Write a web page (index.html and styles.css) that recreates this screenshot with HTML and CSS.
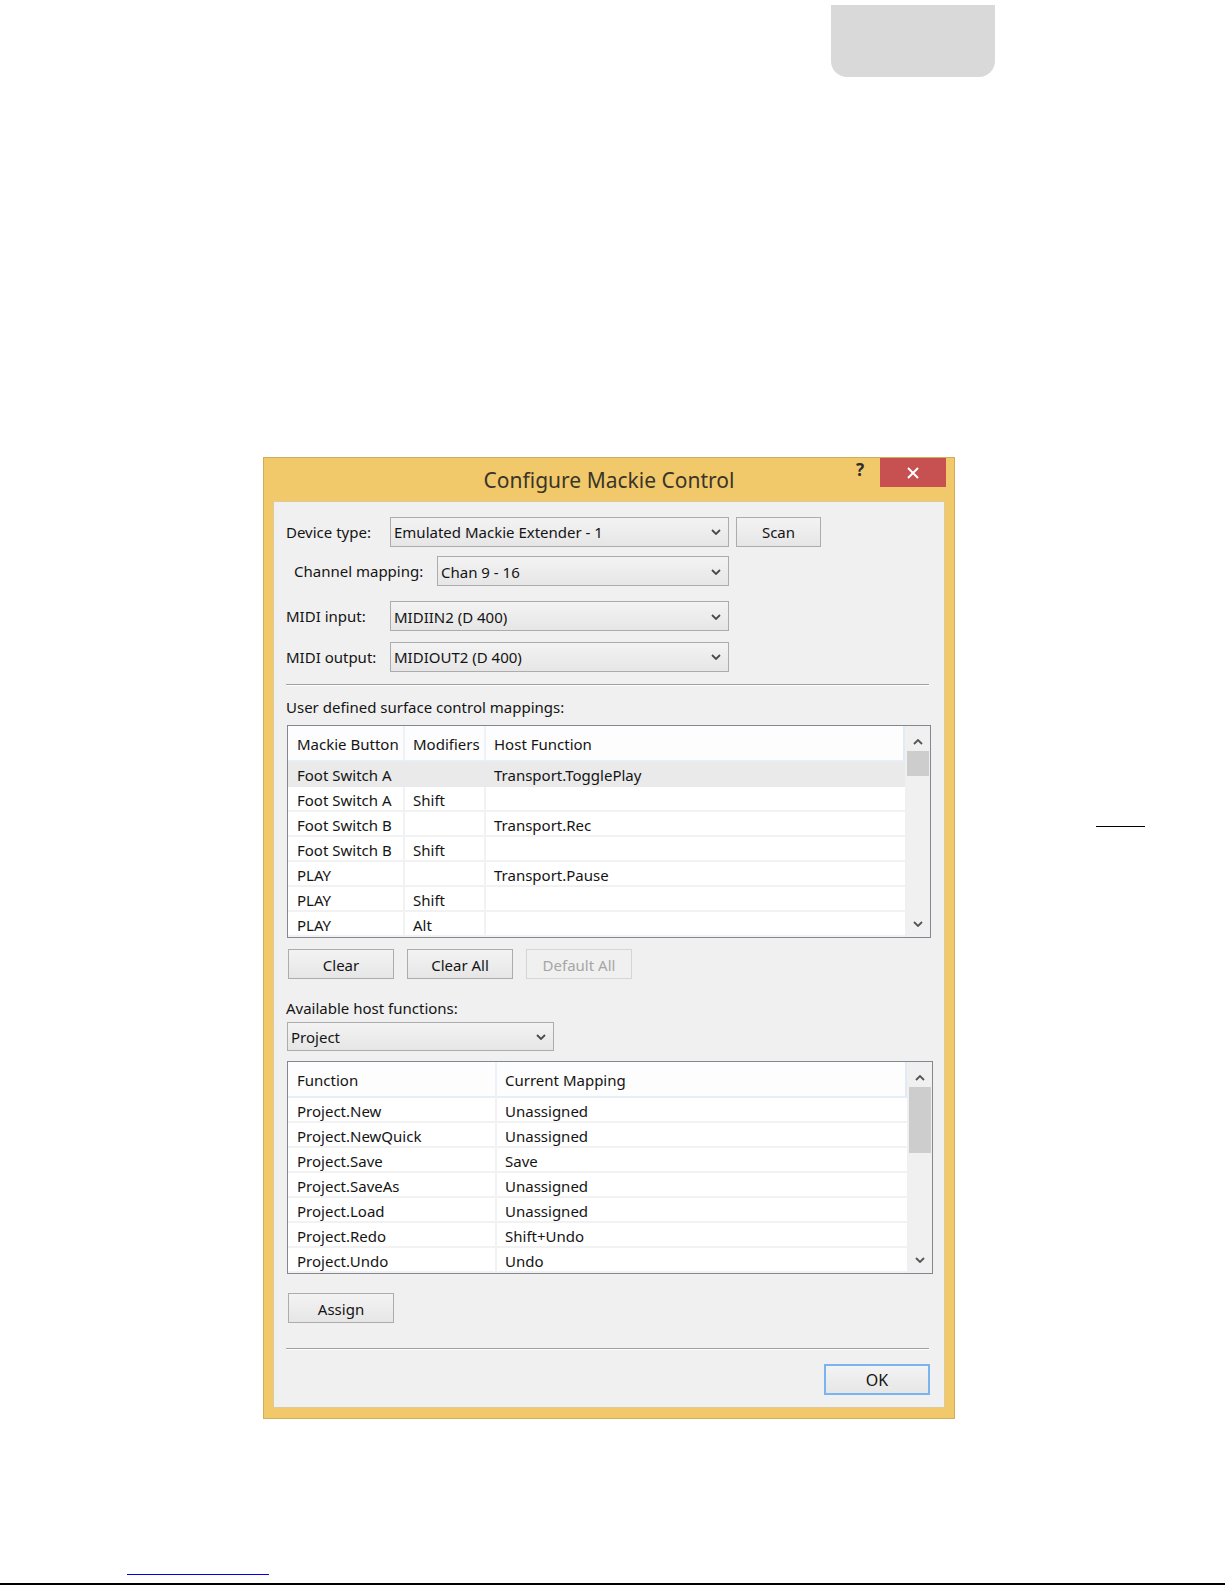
FILE: index.html
```html
<!DOCTYPE html>
<html lang="en">
<head>
<meta charset="utf-8">
<title>Configure Mackie Control</title>
<link rel="stylesheet" href="styles.css">
</head>
<body>
<div class="page">
  <div class="tab"></div>
  <div class="stage">
    <div class="dialog">
      <div class="titlebar">
        <div></div>
        <div class="title">Configure Mackie Control</div>
        <div class="controls">
          <span class="help">?</span>
          <span class="close"><svg width="12" height="12" viewBox="0 0 12 12"><path d="M1 1 L11 11 M11 1 L1 11" stroke="#fff" stroke-width="2" fill="none"/></svg></span>
        </div>
      </div>
      <div class="panel">
        <div class="row row1">
          <span class="lbl lbl-a">Device type:</span>
          <div class="combo w339"><span>Emulated Mackie Extender - 1</span><svg class="chev" width="10" height="6" viewBox="0 0 10 6"><path d="M1 1 L5 5 L9 1" stroke="#4a4a4a" stroke-width="1.8" fill="none"/></svg></div>
          <div class="btn scan">Scan</div>
        </div>
        <div class="row row2">
          <span class="lbl lbl-b">Channel mapping:</span>
          <div class="combo w292"><span>Chan 9 - 16</span><svg class="chev" width="10" height="6" viewBox="0 0 10 6"><path d="M1 1 L5 5 L9 1" stroke="#4a4a4a" stroke-width="1.8" fill="none"/></svg></div>
        </div>
        <div class="row row3">
          <span class="lbl lbl-a">MIDI input:</span>
          <div class="combo w339"><span>MIDIIN2 (D 400)</span><svg class="chev" width="10" height="6" viewBox="0 0 10 6"><path d="M1 1 L5 5 L9 1" stroke="#4a4a4a" stroke-width="1.8" fill="none"/></svg></div>
        </div>
        <div class="row row4">
          <span class="lbl lbl-a">MIDI output:</span>
          <div class="combo w339"><span>MIDIOUT2 (D 400)</span><svg class="chev" width="10" height="6" viewBox="0 0 10 6"><path d="M1 1 L5 5 L9 1" stroke="#4a4a4a" stroke-width="1.8" fill="none"/></svg></div>
        </div>
        <div class="sep sep1"></div>
        <div class="caption cap1">User defined surface control mappings:</div>
        <div class="list list1">
          <div class="grid g1">
            <div class="hd">Mackie Button</div><div class="hd">Modifiers</div><div class="hd last">Host Function</div>
            <div class="c sel">Foot Switch A</div><div class="c sel"></div><div class="c sel last">Transport.TogglePlay</div>
            <div class="c">Foot Switch A</div><div class="c">Shift</div><div class="c last"></div>
            <div class="c">Foot Switch B</div><div class="c"></div><div class="c last">Transport.Rec</div>
            <div class="c">Foot Switch B</div><div class="c">Shift</div><div class="c last"></div>
            <div class="c">PLAY</div><div class="c"></div><div class="c last">Transport.Pause</div>
            <div class="c">PLAY</div><div class="c">Shift</div><div class="c last"></div>
            <div class="c">PLAY</div><div class="c">Alt</div><div class="c last"></div>
          </div>
          <div class="vscroll">
            <svg class="arr" width="10" height="6" viewBox="0 0 10 6"><path d="M1 5 L5 1 L9 5" stroke="#555" stroke-width="1.8" fill="none"/></svg>
            <div class="track"><div class="thumb t1"></div></div>
            <svg class="arr" width="10" height="6" viewBox="0 0 10 6"><path d="M1 1 L5 5 L9 1" stroke="#555" stroke-width="1.8" fill="none"/></svg>
          </div>
        </div>
        <div class="btnrow">
          <div class="btn b106">Clear</div>
          <div class="btn b106">Clear All</div>
          <div class="btn b106 disabled">Default All</div>
        </div>
        <div class="caption cap2">Available host functions:</div>
        <div class="combo project"><span>Project</span><svg class="chev" width="10" height="6" viewBox="0 0 10 6"><path d="M1 1 L5 5 L9 1" stroke="#4a4a4a" stroke-width="1.8" fill="none"/></svg></div>
        <div class="list list2">
          <div class="grid g2">
            <div class="hd">Function</div><div class="hd last">Current Mapping</div>
            <div class="c">Project.New</div><div class="c last">Unassigned</div>
            <div class="c">Project.NewQuick</div><div class="c last">Unassigned</div>
            <div class="c">Project.Save</div><div class="c last">Save</div>
            <div class="c">Project.SaveAs</div><div class="c last">Unassigned</div>
            <div class="c">Project.Load</div><div class="c last">Unassigned</div>
            <div class="c">Project.Redo</div><div class="c last">Shift+Undo</div>
            <div class="c">Project.Undo</div><div class="c last">Undo</div>
          </div>
          <div class="vscroll">
            <svg class="arr" width="10" height="6" viewBox="0 0 10 6"><path d="M1 5 L5 1 L9 5" stroke="#555" stroke-width="1.8" fill="none"/></svg>
            <div class="track"><div class="thumb t2"></div></div>
            <svg class="arr" width="10" height="6" viewBox="0 0 10 6"><path d="M1 1 L5 5 L9 1" stroke="#555" stroke-width="1.8" fill="none"/></svg>
          </div>
        </div>
        <div class="btn b106 assign">Assign</div>
        <div class="sep sep2"></div>
        <div class="btn b106 ok">OK</div>
      </div>
    </div>
    <div class="mark"></div>
  </div>
  <div class="link-line"></div>
  <div class="page-rule"></div>
</div>
</body>
</html>
```

FILE: styles.css
```css
html, body {
  margin: 0;
  padding: 0;
  background: #ffffff;
}
.page {
  width: 1225px;
  height: 1585px;
  overflow: hidden;
  display: flex;
  flex-direction: column;
  font-family: "Noto Sans", "Open Sans", sans-serif;
  font-size: 15px;
  color: #141414;
}
.tab {
  margin-left: 831px;
  margin-top: 5px;
  width: 164px;
  height: 72px;
  background: #d9d9d9;
  border-radius: 0 0 16px 16px;
}
.stage {
  margin-top: 380px;
  display: flex;
  align-items: flex-start;
}
.dialog {
  margin-left: 263px;
  width: 690px;
  height: 960px;
  border: 1px solid #d2ad58;
  background: #f1c96b;
  display: flex;
  flex-direction: column;
}
.titlebar {
  height: 43px;
  display: grid;
  grid-template-columns: 1fr auto 1fr;
}
.title {
  font-size: 21px;
  color: #3a3528;
  line-height: 45px;
}
.controls {
  display: flex;
  justify-content: flex-end;
  align-items: flex-start;
  padding-right: 8px;
}
.help {
  font-weight: bold;
  font-size: 17px;
  color: #2d2d2d;
  margin-right: 16px;
  margin-top: 2px;
  line-height: 20px;
}
.close {
  width: 66px;
  height: 29px;
  background: #c75050;
  display: flex;
  align-items: center;
  justify-content: center;
}
.panel {
  margin: 0 9px 0 9px;
  height: 905px;
  border: 1px solid #dccb98;
  background: #f0f0f0;
  display: flex;
  flex-direction: column;
  align-items: flex-start;
  padding: 0 14px 0 12px;
}
.row {
  display: flex;
  align-items: center;
}
.row1 { margin-top: 14px; height: 31px; }
.row2 { margin-top: 9px; height: 30px; padding-left: 8px; }
.row3 { margin-top: 15px; height: 30px; }
.row4 { margin-top: 10px; height: 31px; }
.lbl { white-space: nowrap; }
.lbl-a { width: 104px; }
.lbl-b { width: 143px; }
.combo {
  box-sizing: border-box;
  height: 30px;
  border: 1px solid #acacac;
  background: linear-gradient(#f3f3f3, #e6e6e6);
  display: flex;
  align-items: center;
  justify-content: space-between;
  padding: 1px 7px 0 3px;
  white-space: nowrap;
}
.w339 { width: 339px; }
.w292 { width: 292px; }
.chev { display: block; }
.btn {
  box-sizing: border-box;
  height: 30px;
  border: 1px solid #acacac;
  background: linear-gradient(#f3f3f3, #e6e6e6);
  display: flex;
  align-items: center;
  justify-content: center;
  padding-top: 1px;
  white-space: nowrap;
}
.scan { width: 85px; margin-left: 7px; }
.b106 { width: 106px; }
.sep {
  width: 643px;
  height: 0;
  border-top: 1px solid #a0a0a0;
  border-bottom: 1px solid #ffffff;
}
.sep1 { margin-top: 12px; }
.caption { line-height: 20px; padding-top: 1px; white-space: nowrap; }
.cap1 { margin-top: 10px; }
.list {
  box-sizing: border-box;
  height: 213px;
  margin-left: 1px;
  border: 1px solid #828790;
  background: #ffffff;
  display: flex;
}
.list1 { margin-top: 8px; width: 644px; }
.list2 { margin-top: 10px; width: 646px; }
.grid {
  flex: 1;
  display: grid;
  grid-auto-rows: 25px;
  align-content: start;
}
.g1 { grid-template-columns: 117px 81px 1fr; grid-template-rows: 36px; }
.g2 { grid-template-columns: 209px 1fr; grid-template-rows: 36px; }
.hd {
  box-sizing: border-box;
  display: flex;
  align-items: center;
  padding-left: 8px;
  padding-top: 2px;
  background: #fdfdfd;
  border-bottom: 2px solid #e8eef7;
  border-right: 2px solid #edf2f9;
  white-space: nowrap;
}
.hd.last { border-right: 2px solid #e2eaf5; }
.c {
  box-sizing: border-box;
  display: flex;
  align-items: center;
  padding-left: 8px;
  padding-top: 3px;
  border-bottom: 2px solid #f2f2f2;
  border-right: 2px solid #f2f2f2;
  white-space: nowrap;
}
.c.last { border-right: none; }
.g1 .c:nth-child(3n+1), .g1 .hd:first-child { padding-left: 9px; }
.g2 .c:nth-child(2n+1), .g2 .hd:first-child { padding-left: 9px; }
.c.sel { background: #eaeaea; border-color: #eaeaea; }
.vscroll {
  width: 25px;
  background: #f0f0f0;
  display: flex;
  flex-direction: column;
  align-items: center;
}
.arr { display: block; flex: none; margin: 13px 0 6px; }
.vscroll .arr:last-child { margin: 6px 0 10px; }
.track {
  flex: 1;
  width: 100%;
  display: flex;
  flex-direction: column;
  align-items: center;
}
.thumb {
  width: 22px;
  background: #cdcdcd;
}
.t1 { height: 25px; }
.t2 { height: 66px; }
.btnrow {
  display: flex;
  gap: 13px;
  margin-top: 11px;
  margin-left: 2px;
}
.disabled {
  color: #a6a6a6;
  border-color: #d5d5d5;
  background: #f0f0f0;
}
.cap2 { margin-top: 18px; }
.project {
  width: 267px;
  height: 29px;
  margin-top: 4px;
  margin-left: 1px;
}
.assign { margin-top: 19px; margin-left: 2px; }
.sep2 { margin-top: 25px; }
.ok {
  margin-top: 14px;
  height: 31px;
  align-self: flex-end;
  border: 2px solid #7ab4ee;
  background: linear-gradient(#f3f3f3, #e6e6e6);
  font-size: 16px;
}
.mark {
  margin-left: 141px;
  margin-top: 369px;
  width: 49px;
  height: 1px;
  background: #000000;
}
.link-line {
  margin-left: 127px;
  margin-top: 155px;
  width: 142px;
  height: 1px;
  background: #0000ee;
}
.page-rule {
  margin-top: 8px;
  width: 1225px;
  height: 2px;
  background: #000000;
}
```
